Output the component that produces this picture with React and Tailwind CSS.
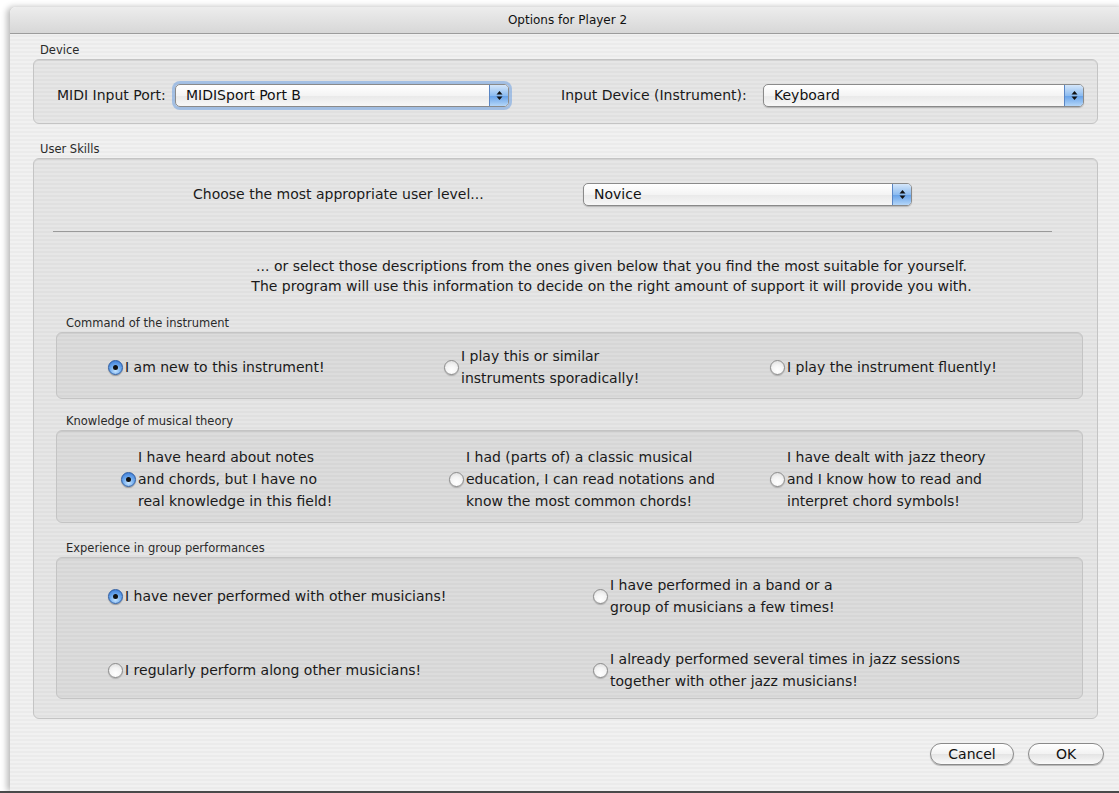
import React from 'react';

const font = { fontFamily: '"Lucida Grande", "DejaVu Sans", sans-serif' };

function Arrows() {
    return (
        <svg width="7" height="11" viewBox="0 0 7 11">
            <path d="M3.5 1 L6.5 4.5 L0.5 4.5 Z" fill="#111" />
            <path d="M3.5 10 L6.5 6.5 L0.5 6.5 Z" fill="#111" />
        </svg>
    );
}

function Popup({ value, width, focus }) {
    return (
        <div
            className={`relative flex h-[23px] items-center rounded-[5px] border border-[#8a8a8a] bg-[linear-gradient(#ffffff,#f4f4f4_50%,#e9e9e9_51%,#f7f7f7)] pl-[10px] text-[14px] text-[#111] ${focus ? 'shadow-[0_0_0_3px_rgba(110,160,225,0.55)]' : 'shadow-[0_1px_1px_rgba(0,0,0,0.2)]'}`}
            style={{ width }}
        >
            <span className="flex-1">{value}</span>
            <div className="flex h-full w-[19px] items-center justify-center rounded-r-[4px] border-l border-[#5a86c4] bg-[linear-gradient(#d4e6fa,#8dbcf0_50%,#64a0e8_51%,#b4d6f8)]">
                <Arrows />
            </div>
        </div>
    );
}

function Radio({ on }) {
    return on ? (
        <span className="flex h-[15px] w-[15px] shrink-0 items-center justify-center rounded-full border border-[#2d5da3] bg-[radial-gradient(circle_at_50%_75%,#c8e6ff,#6aa6ec_50%,#2f6fcf)] shadow-[0_1px_1px_rgba(0,0,0,0.3)]">
            <span className="h-[5px] w-[5px] rounded-full bg-[#111]" />
        </span>
    ) : (
        <span className="h-[15px] w-[15px] shrink-0 rounded-full border border-[#8c8c8c] bg-[radial-gradient(circle_at_50%_75%,#ffffff,#f4f4f4_50%,#d8d8d8)] shadow-[0_1px_1px_rgba(0,0,0,0.2)]" />
    );
}

function Option({ on, lines }) {
    return (
        <div className="flex items-center gap-[2px]">
            <Radio on={on} />
            <div className="text-[14px] leading-[22px] text-[#1a1a1a]">
                {lines.map((l) => (
                    <div key={l}>{l}</div>
                ))}
            </div>
        </div>
    );
}

function GroupLabel({ children }) {
    return <div className="h-[16px] pl-[7px] text-[11.5px] leading-[14px] text-[#2a2a2a]">{children}</div>;
}

function Box({ className = '', children }) {
    return (
        <div className={`rounded-[6px] border border-[#c4c4c4] bg-black/[0.045] shadow-[inset_0_1px_0_rgba(0,0,0,0.06)] ${className}`}>
            {children}
        </div>
    );
}

export default function App() {
    return (
        <div className="flex h-[793px] w-[1119px] flex-col overflow-hidden bg-white" style={font}>
            <div className="ml-[10px] mt-[7px] flex h-[784px] w-[1115px] shrink-0 flex-col rounded-tl-[6px] shadow-[-3px_0_6px_rgba(0,0,0,0.28)]">
                <div className="flex h-[27px] items-center justify-center rounded-tl-[6px] border-b border-[#9c9c9c] bg-[linear-gradient(#ededed,#d7d7d7)] text-[12px] text-[#111]">
                    Options for Player 2
                </div>
                <div className="flex flex-1 flex-col bg-[repeating-linear-gradient(0deg,#f1f1f1_0px,#f1f1f1_2px,#ebebeb_2px,#ebebeb_4px)] pl-[23px] pr-[27px] pt-[9px]">
                    <GroupLabel>Device</GroupLabel>
                    <Box className="flex h-[65px] items-start pl-[23px] pt-[24px]">
                        <div className="flex items-center">
                            <span className="w-[118px] text-[14px] text-[#1a1a1a]">MIDI Input Port:</span>
                            <Popup value="MIDISport Port B" width={334} focus />
                            <span className="ml-[52px] w-[202px] text-[14px] text-[#1a1a1a]">Input Device (Instrument):</span>
                            <Popup value="Keyboard" width={321} />
                        </div>
                    </Box>

                    <div className="mt-[18px]">
                        <GroupLabel>User Skills</GroupLabel>
                    </div>
                    <Box className="flex h-[561px] flex-col pl-[22px] pr-[14px] pt-[24px]">
                        <div className="flex items-center">
                            <span className="ml-[137px] w-[390px] text-[14px] text-[#1a1a1a]">
                                Choose the most appropriate user level...
                            </span>
                            <Popup value="Novice" width={329} />
                        </div>
                        <div className="ml-[-3px] mr-[31px] mt-[25px] h-px bg-[#9a9a9a]" />
                        <div className="mt-[24px] pl-[84px] text-center text-[14px] leading-[20px] text-[#1a1a1a]">
                            <div>... or select those descriptions from the ones given below that you find the most suitable for yourself.</div>
                            <div>The program will use this information to decide on the right amount of support it will provide you with.</div>
                        </div>

                        <div className="mt-[20px] pl-[3px]">
                            <GroupLabel>Command of the instrument</GroupLabel>
                        </div>
                        <Box className="grid h-[67px] grid-cols-[336px_326px_1fr] items-center pl-[51px] pt-[12px] content-start">
                            <Option on lines={['I am new to this instrument!']} />
                            <Option lines={['I play this or similar', 'instruments sporadically!']} />
                            <Option lines={['I play the instrument fluently!']} />
                        </Box>

                        <div className="mt-[15px] pl-[3px]">
                            <GroupLabel>Knowledge of musical theory</GroupLabel>
                        </div>
                        <Box className="grid h-[93px] grid-cols-[328px_321px_1fr] content-start items-center pl-[64px] pt-[15px]">
                            <Option on lines={['I have heard about notes', 'and chords, but I have no', 'real knowledge in this field!']} />
                            <Option lines={['I had (parts of) a classic musical', 'education, I can read notations and', 'know the most common chords!']} />
                            <Option lines={['I have dealt with jazz theory', 'and I know how to read and', 'interpret chord symbols!']} />
                        </Box>

                        <div className="mt-[18px] pl-[3px]">
                            <GroupLabel>Experience in group performances</GroupLabel>
                        </div>
                        <Box className="grid h-[142px] grid-cols-[485px_1fr] grid-rows-[44px_44px] content-start items-center gap-y-[30px] pl-[51px] pt-[16px]">
                            <Option on lines={['I have never performed with other musicians!']} />
                            <Option lines={['I have performed in a band or a', 'group of musicians a few times!']} />
                            <Option lines={['I regularly perform along other musicians!']} />
                            <Option lines={['I already performed several times in jazz sessions', 'together with other jazz musicians!']} />
                        </Box>
                    </Box>

                    <div className="mr-[-6px] mt-[24px] flex justify-end gap-[14px]">
                        <button className="h-[22px] w-[84px] rounded-full border border-[#8a8a8a] bg-[linear-gradient(#ffffff,#f2f2f2_50%,#e4e4e4_51%,#fafafa)] text-[14px] text-[#111] shadow-[0_1px_1px_rgba(0,0,0,0.25)]">
                            Cancel
                        </button>
                        <button className="h-[22px] w-[76px] rounded-full border border-[#8a8a8a] bg-[linear-gradient(#ffffff,#f2f2f2_50%,#e4e4e4_51%,#fafafa)] text-[14px] text-[#111] shadow-[0_1px_1px_rgba(0,0,0,0.25)]">
                            OK
                        </button>
                    </div>
                </div>
            </div>
            <div className="h-[2px] shrink-0 bg-[#4a4a4a]" />
        </div>
    );
}
